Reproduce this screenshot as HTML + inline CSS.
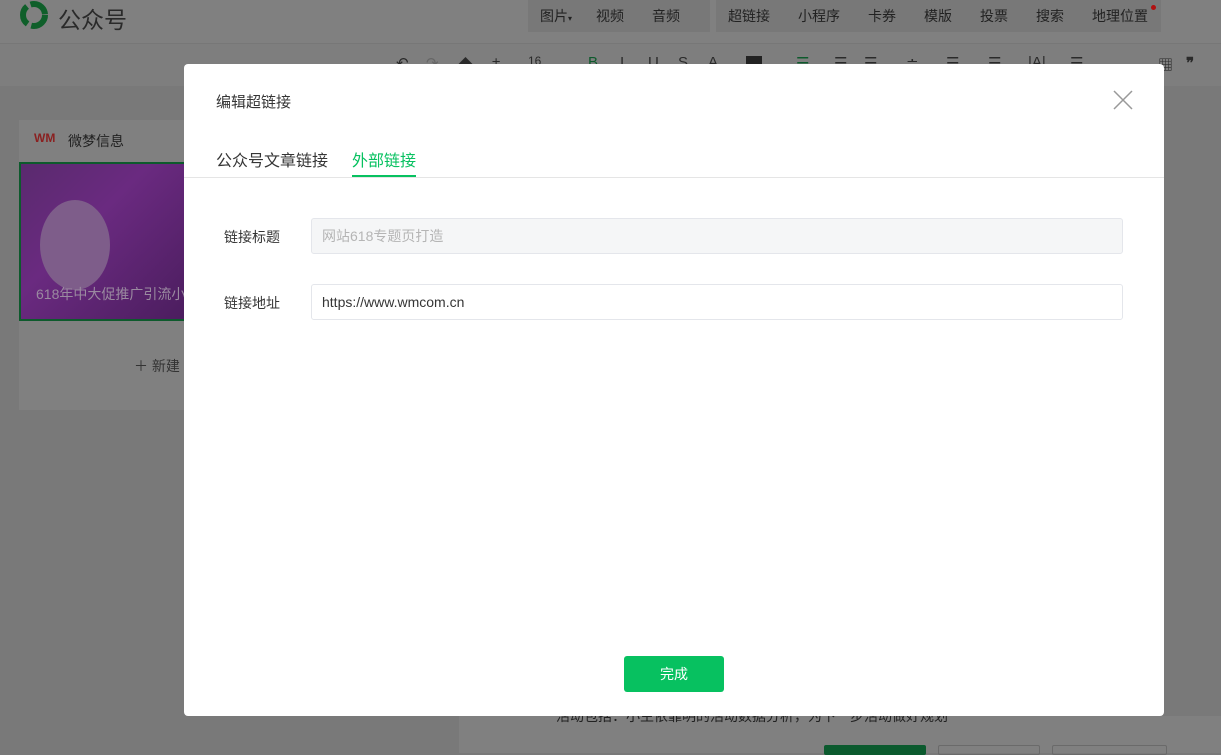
<!DOCTYPE html>
<html><head><meta charset="utf-8"><style>
*{margin:0;padding:0;box-sizing:border-box}
body{width:1221px;height:753px;overflow:hidden;background:#797979;font-family:"Liberation Sans","Noto Sans CJK SC",sans-serif;position:relative;font-size:14px}
.a{position:absolute}
.hdr{left:0;top:0;width:1221px;height:43px;background:#808080}
.tb{left:0;top:43px;width:1221px;height:43px;background:#7e7e7e;border-top:1px solid #777}
.grp{background:#787878;height:32px;top:0}
.m{position:absolute;top:6px;color:#222;font-size:14px}
.t{position:absolute;top:54px;color:#2a2a2a;font-size:15px}
.modal{left:184px;top:64px;width:980px;height:652px;background:#fff;border-radius:4px}
.inp{left:127px;width:812px;height:36px;border:1px solid #e4e6eb;border-radius:3px;padding-left:10px;line-height:34px;font-size:14px}
.lbl{left:40px;font-size:14px;color:#353535}
</style></head><body>
<div class="a hdr"></div>
<svg class="a" style="left:18px;top:0" width="32" height="30" viewBox="0 0 32 30"><circle cx="16" cy="15" r="11" fill="none" stroke="#0f5f2a" stroke-width="6" stroke-dasharray="20 4"/></svg>
<div class="a" style="left:58px;top:1px;font-size:23px;color:#2a2a2a">公众号</div>
<div class="a grp" style="left:528px;width:182px"></div>
<div class="a grp" style="left:716px;width:445px"></div>
<div class="m" style="left:540px">图片<span style="font-size:8px">▾</span></div>
<div class="m" style="left:596px">视频</div>
<div class="m" style="left:652px">音频</div>
<div class="m" style="left:728px">超链接</div>
<div class="m" style="left:798px">小程序</div>
<div class="m" style="left:868px">卡券</div>
<div class="m" style="left:924px">模版</div>
<div class="m" style="left:980px">投票</div>
<div class="m" style="left:1036px">搜索</div>
<div class="m" style="left:1092px">地理位置</div>
<div class="a" style="left:1151px;top:5px;width:5px;height:5px;border-radius:50%;background:#b01010"></div>
<div class="a tb"></div>
<div class="t" style="left:396px">↶</div><div class="t" style="left:426px;color:#666">↷</div>
<div class="t" style="left:458px">◆</div><div class="t" style="left:492px">±</div>
<div class="t" style="left:528px;font-size:12px">16</div>
<div class="t" style="left:588px;color:#0d5a2c">B</div><div class="t" style="left:620px">I</div><div class="t" style="left:648px">U</div><div class="t" style="left:678px">S</div><div class="t" style="left:708px">A</div>
<div class="a" style="left:746px;top:56px;width:16px;height:10px;background:#222"></div>
<div class="t" style="left:796px;color:#0d5a2c">☰</div><div class="t" style="left:834px">☰</div><div class="t" style="left:864px">☰</div><div class="t" style="left:906px">≐</div><div class="t" style="left:946px">☰</div><div class="t" style="left:988px">☰</div><div class="t" style="left:1028px">|A|</div><div class="t" style="left:1070px">☰</div>
<div class="t" style="left:1158px">▦</div><div class="t" style="left:1186px;font-weight:bold">❞</div>
<div class="a" style="left:19px;top:120px;width:170px;height:290px;background:#808080"></div>
<div class="a" style="left:34px;top:131px;font-size:12px;color:#8a2020;font-weight:bold">WM</div>
<div class="a" style="left:68px;top:131px;color:#222">微梦信息</div>
<div class="a" style="left:19px;top:162px;width:170px;height:159px;background:linear-gradient(135deg,#5a2a6e,#6a2a80 40%,#4b1d5e);border:2px solid #0d5a2c"></div>
<div class="a" style="left:40px;top:200px;width:70px;height:90px;border-radius:50%;background:#7e5d8a"></div>
<div class="a" style="left:36px;top:284px;color:#9a8aa0;font-size:14px">618年中大促推广引流小</div>
<div class="a" style="left:134px;top:356px;color:#333;font-size:14px">＋ 新建</div>
<div class="a modal">
<div class="a" style="left:32px;top:27px;font-size:15px;color:#353535">编辑超链接</div>
<svg class="a" style="left:929px;top:26px" width="20" height="20"><path d="M1 1L19 19M19 1L1 19" stroke="#999" stroke-width="1.5"/></svg>
<div class="a" style="left:32px;top:83px;font-size:16px;color:#353535">公众号文章链接</div>
<div class="a" style="left:168px;top:83px;font-size:16px;color:#07c160">外部链接</div>
<div class="a" style="left:168px;top:111px;width:64px;height:2px;background:#07c160"></div>
<div class="a" style="left:0;top:113px;width:980px;height:1px;background:#e5e5e5"></div>
<div class="a lbl" style="top:163px">链接标题</div>
<div class="a inp" style="top:154px;background:#f5f6f7;color:#b5b5b5">网站618专题页打造</div>
<div class="a lbl" style="top:229px">链接地址</div>
<div class="a inp" style="top:220px;color:#353535">https://www.wmcom.cn</div>
<div class="a" style="left:440px;top:592px;width:100px;height:36px;background:#07c160;border-radius:3px;color:#fff;text-align:center;line-height:36px;font-size:14px">完成</div>
</div>
<div class="a" style="left:459px;top:716px;width:762px;height:37px;background:#808080"></div>
<div class="a" style="left:556px;top:716px;font-size:14px;color:#222;height:8px;overflow:hidden;line-height:0">活动包括：小主依靠明的活动数据分析，为下一步活动做好规划</div>
<div class="a" style="left:824px;top:745px;width:102px;height:10px;background:#0b5a2e;border-radius:2px"></div>
<div class="a" style="left:938px;top:745px;width:102px;height:10px;border:1px solid #6a6a6a;border-radius:2px"></div>
<div class="a" style="left:1052px;top:745px;width:115px;height:10px;border:1px solid #6a6a6a;border-radius:2px"></div>
</body></html>
